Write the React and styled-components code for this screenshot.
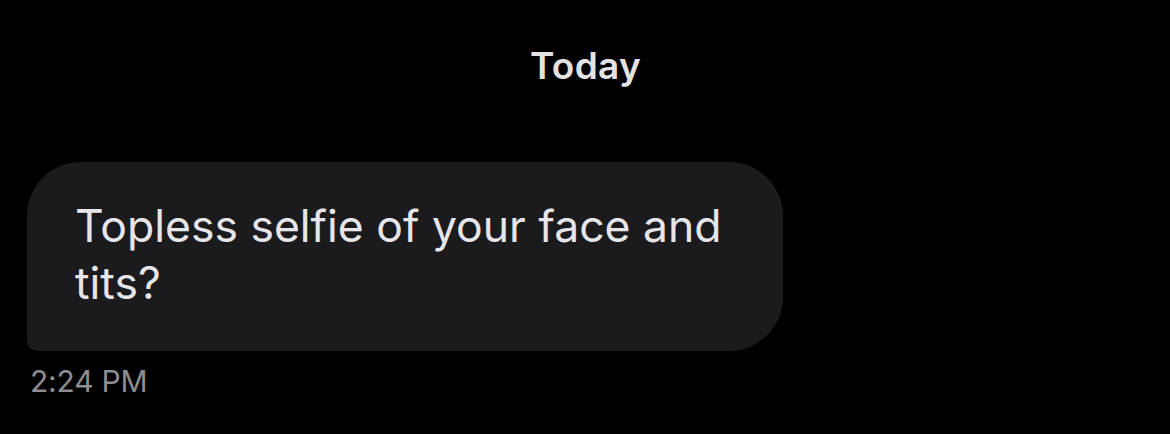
import React from "react";
import styled, { createGlobalStyle } from "styled-components";

const Global = createGlobalStyle`
  html, body { margin: 0; padding: 0; background: #000; }
  body { font-family: Inter, "Noto Sans", sans-serif; -webkit-font-smoothing: antialiased; }
`;

const Screen = styled.div`
  width: 1170px;
  height: 434px;
  background: #000;
  display: flex;
  flex-direction: column;
  overflow: hidden;
`;

const DateLabel = styled.div`
  text-align: center;
  color: #e3e3e6;
  font-weight: 600;
  font-size: 37px;
  line-height: 44px;
  padding-top: 44px;
  padding-left: 1px;
  letter-spacing: 0.3px;
`;

const Thread = styled.div`
  display: flex;
  flex-direction: column;
  align-items: flex-start;
  padding: 74px 0 0 27px;
`;

const Bubble = styled.div`
  background: #1b1b1d;
  color: #e6e6ea;
  width: 756px;
  box-sizing: border-box;
  padding: 36px 40px 39px 48px;
  border-radius: 54px 54px 54px 10px;
  font-size: 44.5px;
  line-height: 57px;
`;

const Time = styled.div`
  color: #8d8d92;
  font-size: 30px;
  line-height: 34px;
  margin-top: 13px;
  padding-left: 3px;
  letter-spacing: -0.2px;
`;

export default function App() {
  return (
    <Screen>
      <Global />
      <DateLabel>Today</DateLabel>
      <Thread>
        <Bubble>Topless selfie of your face and tits?</Bubble>
        <Time>2:24 PM</Time>
      </Thread>
    </Screen>
  );
}
